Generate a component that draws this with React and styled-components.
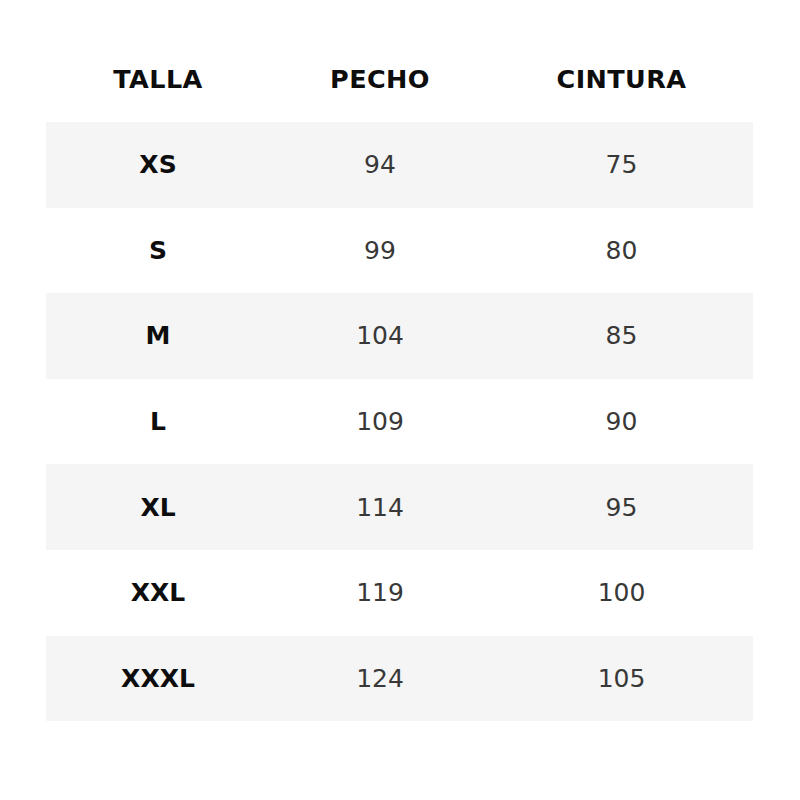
import React from "react";
import styled, { createGlobalStyle } from "styled-components";

const Global = createGlobalStyle`
  html, body { margin: 0; padding: 0; background: #fff; }
  body { font-family: "DejaVu Sans", "Liberation Sans", sans-serif; }
`;

const Page = styled.div`
  width: 800px;
  height: 800px;
  padding: 36px 47px 0 46px;
  box-sizing: border-box;
`;

const Table = styled.div`
  display: grid;
  grid-template-columns: 224px 220px 263px;
`;

const Row = styled.div`
  display: contents;
`;

const Cell = styled.div`
  height: ${p => (p.$head ? "86px" : "85.6px")};
  display: flex;
  align-items: center;
  justify-content: center;
  background: ${p => (p.$shade ? "#f5f5f5" : "transparent")};
  font-size: ${p => (p.$head ? "25.5px" : "25px")};
  font-weight: ${p => (p.$bold ? 700 : 400)};
  color: ${p => (p.$bold ? "#0d0d0d" : "#383838")};
  letter-spacing: ${p => (p.$head ? "0.4px" : "0")};
`;

const rows = [
  ["XS", "94", "75"],
  ["S", "99", "80"],
  ["M", "104", "85"],
  ["L", "109", "90"],
  ["XL", "114", "95"],
  ["XXL", "119", "100"],
  ["XXXL", "124", "105"],
];

export default function App() {
  return (
    <>
      <Global />
      <Page>
        <Table>
          <Row>
            <Cell $head $bold>TALLA</Cell>
            <Cell $head $bold>PECHO</Cell>
            <Cell $head $bold>CINTURA</Cell>
          </Row>
          {rows.map((r, i) => (
            <Row key={r[0]}>
              <Cell $shade={i % 2 === 0} $bold>{r[0]}</Cell>
              <Cell $shade={i % 2 === 0}>{r[1]}</Cell>
              <Cell $shade={i % 2 === 0}>{r[2]}</Cell>
            </Row>
          ))}
        </Table>
      </Page>
    </>
  );
}
